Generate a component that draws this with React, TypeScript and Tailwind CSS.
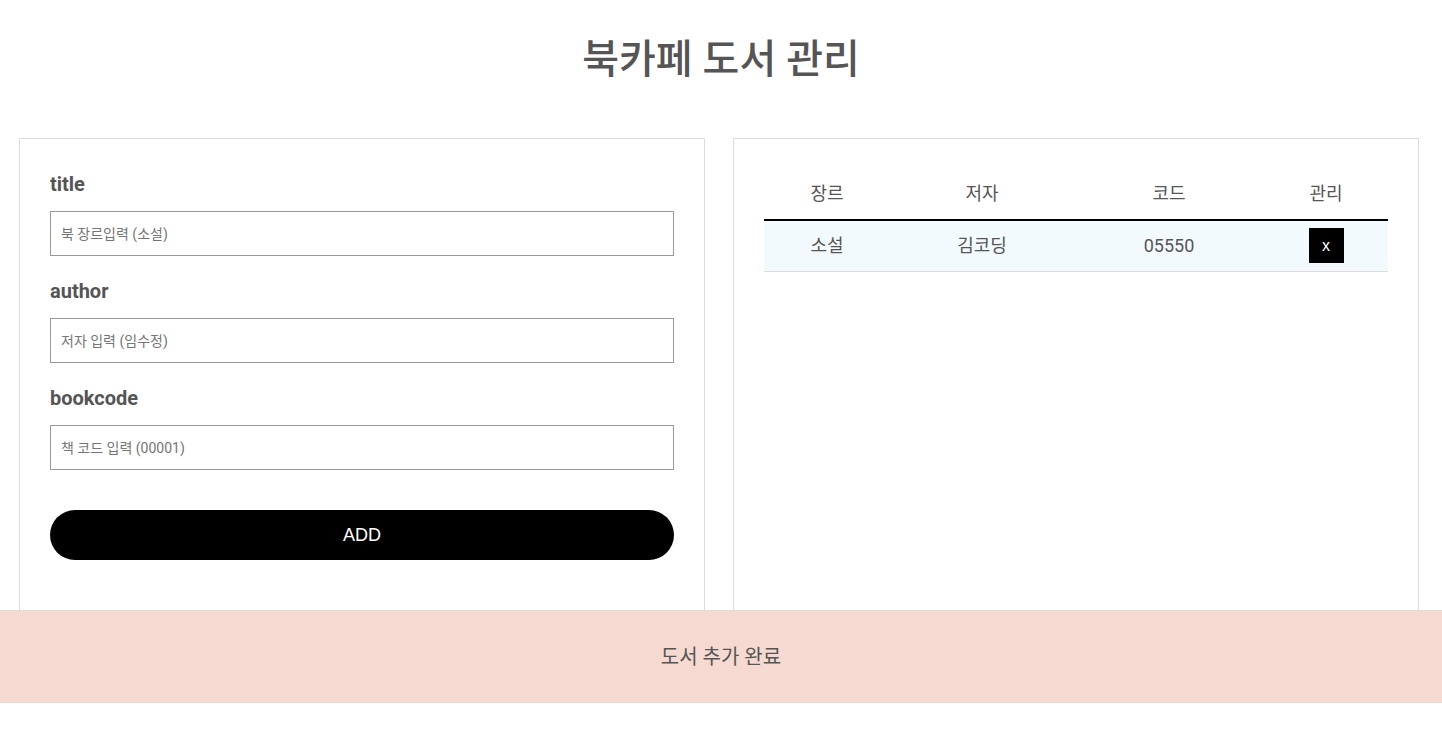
import React from "react";

const font = { fontFamily: 'Roboto, "Noto Sans CJK KR", sans-serif' };

function Field({ label, placeholder, last }: { label: string; placeholder: string; last?: boolean }) {
  return (
    <div className={last ? "" : "mb-[22px]"}>
      <div className="mt-[2px] mb-[13px] h-[27px] overflow-hidden text-[20px] leading-[27px] font-bold text-[#555]">{label}</div>
      <input
        className="block w-full h-[45px] border border-[#999] px-[10px] text-[14px] text-[#555] placeholder:text-[#757575] outline-none"
        placeholder={placeholder}
      />
    </div>
  );
}

export default function App() {
  return (
    <div className="bg-white min-h-[729px] text-[#555]" style={font}>
      <h1 className="pt-[30px] h-[90px] mb-[48px] text-center text-[40px] leading-[60px] font-medium text-[#555]">
        북카페 도서 관리
      </h1>
      <div className="ml-[19px] w-[1400px] flex gap-[28px]">
        <div className="flex-1 border border-[#ddd] border-b-0 px-[30px] pt-[30px] pb-[50px]">
          <Field label="title" placeholder="북 장르입력 (소설)" />
          <Field label="author" placeholder="저자 입력 (임수정)" />
          <Field label="bookcode" placeholder="책 코드 입력 (00001)" last />
          <button
            className="mt-[40px] w-full h-[50px] rounded-full bg-black text-white text-[18px]"
            style={{ fontFamily: '"Liberation Sans", Arial, sans-serif' }}
          >
            ADD
          </button>
        </div>
        <div className="flex-1 border border-[#ddd] border-b-0 px-[30px] pt-[30px]">
          <div className="grid grid-cols-[126px_184px_190px_124px] h-[52px] pb-[2px] items-center text-center text-[18px] text-[#555] border-b-2 border-black">
            <div>장르</div>
            <div>저자</div>
            <div>코드</div>
            <div>관리</div>
          </div>
          <div className="grid grid-cols-[126px_184px_190px_124px] h-[51px] pb-[1px] items-center text-center text-[18px] text-[#555] bg-[#f3fafd] border-b border-[#ddd]">
            <div>소설</div>
            <div>김코딩</div>
            <div>05550</div>
            <div className="flex justify-center">
              <button
                className="w-[35px] h-[35px] bg-black text-white text-[16px] leading-none"
                style={{ fontFamily: '"Liberation Sans", Arial, sans-serif' }}
              >
                x
              </button>
            </div>
          </div>
        </div>
      </div>
      <div className="h-[93px] bg-[#f6dad1] border-t border-[#ddd] flex items-center justify-center text-[20px] text-[#555]">
        도서 추가 완료
      </div>
    </div>
  );
}
